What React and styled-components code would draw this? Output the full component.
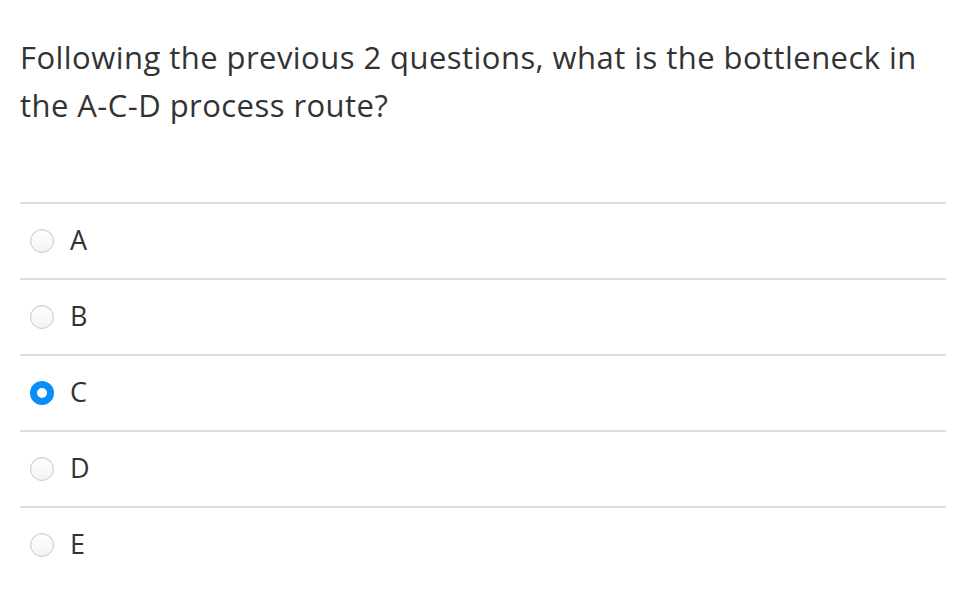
import React, { useState } from 'react';
import styled, { createGlobalStyle } from 'styled-components';

const GlobalStyle = createGlobalStyle`
  html, body {
    margin: 0;
    padding: 0;
    background: #ffffff;
  }
  body {
    font-family: 'Open Sans', 'Liberation Sans', sans-serif;
    color: #333333;
  }
`;

const Page = styled.div`
  padding: 33px 24px 0 20px;
`;

const Question = styled.p`
  margin: 0;
  font-size: 31px;
  line-height: 48px;
  font-weight: 400;
  letter-spacing: 0.45px;
  color: #333333;
`;

const Options = styled.ul`
  list-style: none;
  margin: 73px 0 0 0;
  padding: 0;
`;

const Option = styled.li`
  display: flex;
  align-items: center;
  gap: 16px;
  height: 74px;
  padding-left: 10px;
  border-top: 2px solid #dddddd;
  cursor: pointer;
`;

const Radio = styled.span`
  box-sizing: border-box;
  width: 24px;
  height: 24px;
  border-radius: 50%;
  flex-shrink: 0;
  border: ${p => (p.$checked ? '7px solid #0a8cfa' : '1px solid #c9c9c9')};
  background: ${p => (p.$checked ? '#ffffff' : 'linear-gradient(#ffffff, #f3f3f3)')};
  box-shadow: ${p => (p.$checked ? 'none' : 'inset 0 1px 1px rgba(0, 0, 0, 0.06)')};
`;

const Label = styled.span`
  font-size: 27px;
  line-height: 1;
  margin-top: -3px;
  color: #333333;
`;

const choices = ['A', 'B', 'C', 'D', 'E'];

const App = () => {
  const [selected, setSelected] = useState('C');

  return (
    <Page>
      <GlobalStyle />
      <Question>
        Following the previous 2 questions, what is the bottleneck in the A-C-D process route?
      </Question>
      <Options>
        {choices.map(choice => (
          <Option key={choice} onClick={() => setSelected(choice)}>
            <Radio $checked={selected === choice} />
            <Label>{choice}</Label>
          </Option>
        ))}
      </Options>
    </Page>
  );
};

export default App;
